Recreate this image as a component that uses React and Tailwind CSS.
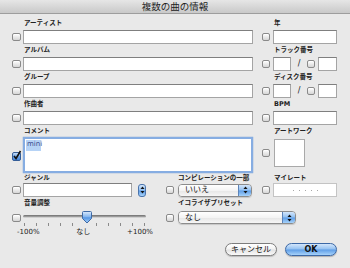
import React from "react";

function Check({ w = "w-[9px]" }) {
  return (
    <span
      className={`block ${w} h-[8px] shrink-0 rounded-[2px] border border-[#8a8a8a] bg-gradient-to-b from-[#ffffff] to-[#d6d6d6] shadow-[inset_0_1px_0_#ffffff]`}
    />
  );
}

function CheckOn() {
  return (
    <svg width="11" height="11" viewBox="0 0 11 11" className="block shrink-0 -ml-[1px]">
      <defs>
        <linearGradient id="cb" x1="0" y1="0" x2="0" y2="1">
          <stop offset="0" stopColor="#d7e8fb" />
          <stop offset="0.5" stopColor="#6fa6e8" />
          <stop offset="1" stopColor="#3d7fd6" />
        </linearGradient>
      </defs>
      <rect x="1.5" y="2.5" width="8" height="8" rx="1.5" fill="url(#cb)" stroke="#345d97" />
      <path d="M3 6 L5 8.5 L9.5 1" fill="none" stroke="#111" strokeWidth="1.6" />
    </svg>
  );
}

function Field({ w }) {
  return <div className={`${w} h-[14px] bg-white border border-[#a4a4a4] border-t-[#7f7f7f]`} />;
}

function Label({ children, h = "h-[13px]" }) {
  return (
    <div className={`${h} flex items-center pl-[12px] text-[6.5px] font-bold leading-none text-[#222] whitespace-nowrap`}>
      {children}
    </div>
  );
}

function Arrows() {
  return (
    <svg width="5" height="8" viewBox="0 0 5 8" className="block">
      <path d="M2.5 0.5 L4.5 3 L0.5 3 Z" fill="#111" />
      <path d="M2.5 7.5 L4.5 5 L0.5 5 Z" fill="#111" />
    </svg>
  );
}

function Popup({ w, text }) {
  return (
    <div className={`${w} h-[13px] flex rounded-[4px] border border-[#8c8c8c] overflow-hidden shadow-[0_1px_1px_rgba(0,0,0,0.15)]`}>
      <div className="flex-1 flex items-center pl-[6px] text-[8px] leading-none text-[#111] bg-[linear-gradient(to_bottom,#ffffff_0%,#f4f4f4_50%,#e6e6e6_51%,#f6f6f6_100%)]">
        {text}
      </div>
      <div className="w-[13px] flex items-center justify-center border-l border-[#5c83b8] bg-[linear-gradient(to_bottom,#d3e6fb_0%,#92c0f1_48%,#5e9de6_52%,#a6d2fa_100%)]">
        <Arrows />
      </div>
    </div>
  );
}

function Row({ left, right, children }) {
  return (
    <div className="flex">
      <div className="w-[241px]">
        <Label>{left}</Label>
        <div className="flex items-center h-[14px]">
          <Check />
          <div className="ml-[2px]">
            <Field w="w-[230px]" />
          </div>
        </div>
      </div>
      <div className="ml-[9px]">
        <Label>{right}</Label>
        <div className="flex items-center h-[14px]">
          <Check w="w-[8px]" />
          <div className="ml-[3px] flex items-center">{children}</div>
        </div>
      </div>
    </div>
  );
}

function NumPair() {
  return (
    <>
      <Field w="w-[18px]" />
      <span className="w-[16px] text-center text-[8px] leading-none text-[#222]">/</span>
      <Check w="w-[8px]" />
      <div className="ml-[3px]">
        <Field w="w-[19px]" />
      </div>
    </>
  );
}

export default function App() {
  const ticks = Array.from({ length: 11 });
  return (
    <div className="w-[350px] h-[268px] overflow-hidden bg-[#e9e9e9] font-['DejaVu_Sans','Noto_Sans_CJK_JP',sans-serif] text-[#222]">
      <div className="h-[14px] flex items-center justify-center bg-gradient-to-b from-[#e6e6e6] to-[#c9c9c9] border-b border-[#9d9d9d] text-[9.5px] leading-none text-[#222]">
        複数の曲の情報
      </div>
      <div className="pl-[12px] pt-[3px]">
        <Row left="アーティスト" right="年">
          <Field w="w-[64px]" />
        </Row>
        <Row left="アルバム" right="トラック番号">
          <NumPair />
        </Row>
        <Row left="グループ" right="ディスク番号">
          <NumPair />
        </Row>
        <Row left="作曲者" right="BPM">
          <Field w="w-[64px]" />
        </Row>

        {/* comment + artwork */}
        <div className="flex">
          <div className="w-[241px]">
            <Label h="h-[12px]">コメント</Label>
            <div className="flex items-center h-[36px]">
              <CheckOn />
              <div className="ml-[1px] w-[230px] h-[36px] bg-white border-2 border-[#86ade2] shadow-[0_0_1px_#5b8fd6] pl-[1px] pt-[1px]">
                <div className="w-[15px] h-[11px] bg-[#b6d3f6] text-[7px] leading-[8px] text-[#3c4a8c] pl-[1px]">mini</div>
              </div>
            </div>
          </div>
          <div className="ml-[9px]">
            <Label h="h-[12px]">アートワーク</Label>
            <div className="flex items-center h-[29px] mt-[1px]">
              <Check w="w-[8px]" />
              <div className="ml-[4px] w-[31px] h-[28px] bg-white border border-[#a9a9a9]" />
            </div>
          </div>
        </div>

        {/* genre / compilation / rating */}
        <div className="flex">
          <div className="w-[134px]">
            <Label h="h-[10px]">ジャンル</Label>
            <div className="flex items-center h-[14px]">
              <Check />
              <div className="ml-[2px]">
                <Field w="w-[109px]" />
              </div>
              <div className="ml-[6px] w-[8px] h-[13px] rounded-[3px] border border-[#4a74ad] flex items-center justify-center bg-[linear-gradient(to_bottom,#d3e6fb_0%,#92c0f1_48%,#5e9de6_52%,#a6d2fa_100%)]">
                <Arrows />
              </div>
            </div>
          </div>
          <div className="ml-[20px] w-[86px]">
            <Label h="h-[10px]">コンピレーションの一部</Label>
            <div className="flex items-center h-[14px]">
              <Check w="w-[8px]" />
              <div className="ml-[4px]">
                <Popup w="w-[74px]" text="いいえ" />
              </div>
            </div>
          </div>
          <div className="ml-[10px]">
            <Label h="h-[10px]">マイレート</Label>
            <div className="flex items-center h-[14px]">
              <Check w="w-[8px]" />
              <div className="ml-[3px] w-[64px] h-[14px] bg-white border border-[#c4c4c4] flex items-center justify-center gap-[5px]">
                {[0, 1, 2, 3, 4].map((i) => (
                  <span key={i} className="block w-[1px] h-[1px] bg-[#a8a8a8]" />
                ))}
              </div>
            </div>
          </div>
        </div>

        {/* volume / EQ */}
        <div className="flex">
          <div className="w-[134px]">
            <Label>音量調整</Label>
            <div className="flex items-start">
              <div className="mt-[4px]">
                <Check />
              </div>
              <div className="ml-[2px] w-[125px]">
                <div className="relative h-[13px]">
                  <div className="absolute left-0 right-0 top-[5px] h-[3px] rounded-full bg-gradient-to-b from-[#6e6e6e] to-[#a9a9a9] border-b border-[#d0d0d0]" />
                  <svg width="10" height="13" viewBox="0 0 10 13" className="absolute left-[59px] top-[1px]">
                    <defs>
                      <linearGradient id="th" x1="0" y1="0" x2="0" y2="1">
                        <stop offset="0" stopColor="#dcebfc" />
                        <stop offset="0.45" stopColor="#86b7ef" />
                        <stop offset="0.55" stopColor="#5596e4" />
                        <stop offset="1" stopColor="#a9d3fb" />
                      </linearGradient>
                    </defs>
                    <path d="M1.5 0.5 H8.5 Q9.5 0.5 9.5 1.5 V7.5 L5 12 L0.5 7.5 V1.5 Q0.5 0.5 1.5 0.5 Z" fill="url(#th)" stroke="#3f6aa6" />
                  </svg>
                </div>
                <div className="flex justify-between px-[1px] h-[3px]">
                  {ticks.map((_, i) => (
                    <span key={i} className={`block w-[1px] h-[3px] ${i === 5 ? "bg-transparent" : "bg-[#8a8a8a]"}`} />
                  ))}
                </div>
                <div className="mt-[2px] -ml-[6px] -mr-[7px] h-[8px] flex justify-between items-center text-[7px] leading-none text-[#222]">
                  <span>-100%</span>
                  <span>なし</span>
                  <span>+100%</span>
                </div>
              </div>
            </div>
          </div>
          <div className="ml-[20px]">
            <Label>イコライザプリセット</Label>
            <div className="flex items-center h-[13px] mt-[1px]">
              <Check w="w-[8px]" />
              <div className="ml-[4px]">
                <Popup w="w-[118px]" text="なし" />
              </div>
            </div>
          </div>
        </div>

        {/* buttons */}
        <div className="mt-[7px] flex justify-end pr-[13px] gap-[8px]">
          <div className="w-[52px] h-[13px] rounded-full border border-[#7c7c7c] flex items-center justify-center text-[8px] leading-none text-[#111] bg-[linear-gradient(to_bottom,#ffffff_0%,#f3f3f3_48%,#e2e2e2_52%,#fafafa_100%)] shadow-[0_1px_1px_rgba(0,0,0,0.2)]">
            キャンセル
          </div>
          <div className="w-[52px] h-[13px] rounded-full border border-[#3c68a6] flex items-center justify-center text-[8px] font-bold leading-none text-[#111] bg-[linear-gradient(to_bottom,#d3e6fb_0%,#92c0f1_48%,#5e9de6_52%,#a6d2fa_100%)] shadow-[0_1px_1px_rgba(0,0,0,0.25)]">
            OK
          </div>
        </div>
      </div>
    </div>
  );
}
